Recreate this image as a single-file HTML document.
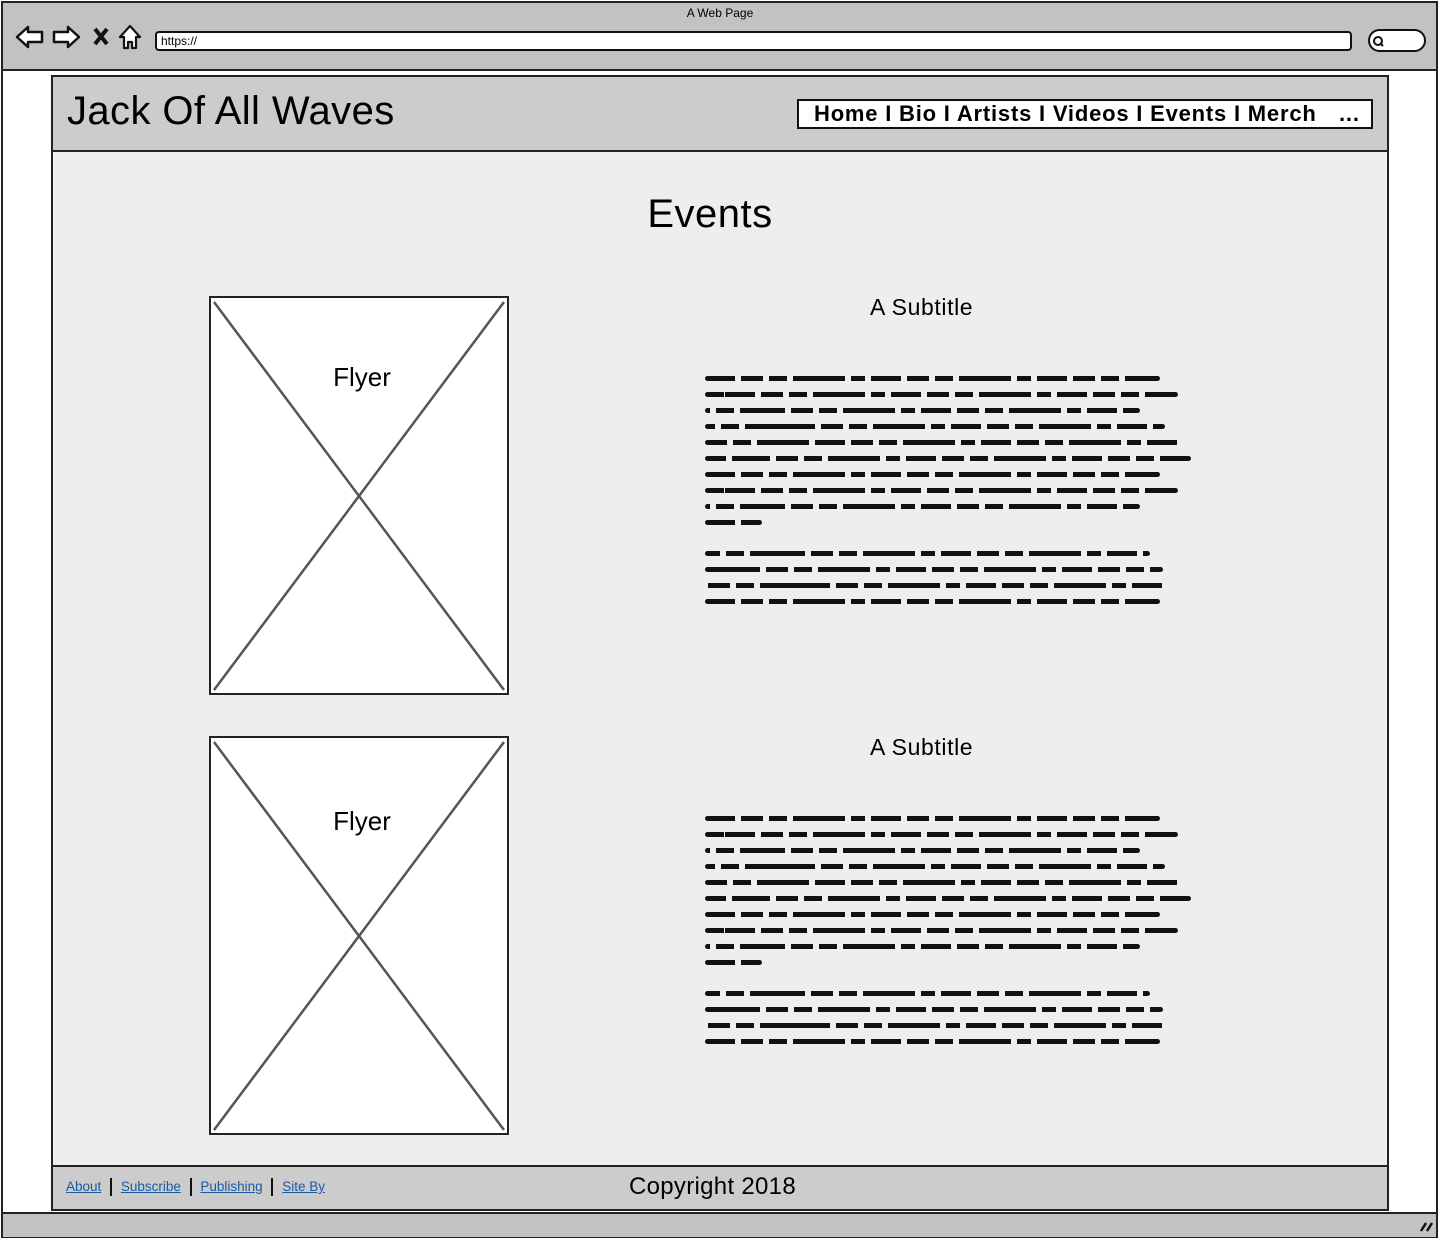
<!DOCTYPE html>
<html><head><meta charset="utf-8"><style>
*{margin:0;padding:0;box-sizing:border-box}
body{width:1440px;height:1240px;background:#fff;position:relative;overflow:hidden;font-family:"Liberation Sans",sans-serif;color:#000}
.a{position:absolute}
.frame{left:1px;top:1px;width:1437px;height:1237px;border:2px solid #222;background:#fff}
.top{left:3px;top:3px;width:1433px;height:68px;background:#c2c2c2;border-bottom:2px solid #222}
.bot{left:3px;top:1212px;width:1433px;height:25px;background:#c2c2c2;border-top:2px solid #222}
.page{left:51px;top:75px;width:1338px;height:1136px;border:2px solid #222;background:#eee}
.hdr{left:53px;top:77px;width:1334px;height:75px;background:#ccc;border-bottom:2px solid #222}
.ftr{left:53px;top:1165px;width:1334px;height:44px;background:#ccc;border-top:2px solid #222}
.sc{position:absolute;left:705px;height:5px;border-radius:3px;
background:repeating-linear-gradient(90deg,#111 0 30px,transparent 30px 36px,#111 36px 58px,transparent 58px 64px,#111 64px 82px,transparent 82px 88px,#111 88px 140px,transparent 140px 146px,#111 146px 160px,transparent 160px 166px)}
.flyer{position:absolute;left:209px;width:300px;height:399px;border:2px solid #222;background:#fff}
.flyer span{position:absolute;left:0;width:100%;text-align:center;font-size:26px;top:64px;padding-left:6px}
.sub{position:absolute;left:870px;font-size:23px;letter-spacing:0.6px}
.lk a{color:#1a5aa0;text-decoration:underline;font-size:13.5px}
</style></head><body>
<div class="a frame"></div>
<div class="a top"></div>
<div class="a" style="left:0;top:6px;width:1440px;text-align:center;font-size:12px">A Web Page</div>
<svg class="a" style="left:14px;top:22px" width="135" height="30" viewBox="0 0 135 30">
<path d="M3 15 L14 5 L14 10 L28 10 L28 20 L14 20 L14 25 Z" fill="#fff" stroke="#111" stroke-width="2.5" stroke-linejoin="round"/>
<path d="M65 15 L54 5 L54 10 L40 10 L40 20 L54 20 L54 25 Z" fill="#fff" stroke="#111" stroke-width="2.5" stroke-linejoin="round"/>
<path d="M81 7 L93 22 M93 7 L81 22" stroke="#111" stroke-width="4"/>
<path d="M116 4 L106 15 L110 15 L110 26 L114 26 L114 20 L118 20 L118 26 L122 26 L122 15 L126 15 Z" fill="#fff" stroke="#111" stroke-width="2.2" stroke-linejoin="round"/>
</svg>
<div class="a" style="left:155px;top:31px;width:1197px;height:20px;background:#fff;border:2px solid #111;border-radius:4px;font-size:12px;padding:1px 4px">https://</div>
<div class="a" style="left:1368px;top:29px;width:58px;height:23px;background:#fff;border:2px solid #111;border-radius:12px"></div>
<svg class="a" style="left:1372px;top:35px" width="14" height="12"><circle cx="6" cy="6" r="4" fill="none" stroke="#111" stroke-width="2"/><path d="M8 8 L11 11" stroke="#111" stroke-width="2"/></svg>
<div class="a page"></div>
<div class="a hdr"></div>
<div class="a" style="left:67px;top:89px;font-size:40px;letter-spacing:0.4px;white-space:nowrap">Jack Of All Waves</div>
<div class="a" style="left:797px;top:99px;width:576px;height:30px;background:#fff;border:2px solid #111;font-size:22px;font-weight:bold;padding:0 0 0 15px;line-height:26px;letter-spacing:0.8px;white-space:nowrap;overflow:hidden">Home I Bio I Artists I Videos I Events I Merch<span style="position:absolute;left:540px;top:0">...</span></div>
<div class="a" style="left:0;top:192px;width:1420px;text-align:center;font-size:40px;letter-spacing:0.5px">Events</div>

<div class="flyer" style="top:296px"><svg class="a" style="left:0;top:0" width="296" height="395"><path d="M3 4 L293 392 M293 4 L3 392" stroke="#555" stroke-width="2.5"/></svg><span>Flyer</span></div>
<div class="flyer" style="top:736px"><svg class="a" style="left:0;top:0" width="296" height="395"><path d="M3 4 L293 392 M293 4 L3 392" stroke="#555" stroke-width="2.5"/></svg><span style="top:68px">Flyer</span></div>
<div class="sub" style="top:294px">A Subtitle</div>
<div class="sub" style="top:734px">A Subtitle</div>

<div class="sc" style="top:376px;width:455px"></div>
<div class="sc" style="top:392px;width:473px;background-position:20px 0"></div>
<div class="sc" style="top:408px;width:435px;background-position:50px 0"></div>
<div class="sc" style="top:424px;width:460px;background-position:80px 0"></div>
<div class="sc" style="top:440px;width:478px;background-position:110px 0"></div>
<div class="sc" style="top:456px;width:486px;background-position:35px 0"></div>
<div class="sc" style="top:472px;width:455px"></div>
<div class="sc" style="top:488px;width:473px;background-position:20px 0"></div>
<div class="sc" style="top:504px;width:435px;background-position:50px 0"></div>
<div class="sc" style="top:520px;width:57px"></div>
<div class="sc" style="top:551px;width:445px;background-position:70px 0"></div>
<div class="sc" style="top:567px;width:458px;background-position:25px 0"></div>
<div class="sc" style="top:583px;width:460px;background-position:95px 0"></div>
<div class="sc" style="top:599px;width:455px"></div>

<div class="sc" style="top:816px;width:455px"></div>
<div class="sc" style="top:832px;width:473px;background-position:20px 0"></div>
<div class="sc" style="top:848px;width:435px;background-position:50px 0"></div>
<div class="sc" style="top:864px;width:460px;background-position:80px 0"></div>
<div class="sc" style="top:880px;width:478px;background-position:110px 0"></div>
<div class="sc" style="top:896px;width:486px;background-position:35px 0"></div>
<div class="sc" style="top:912px;width:455px"></div>
<div class="sc" style="top:928px;width:473px;background-position:20px 0"></div>
<div class="sc" style="top:944px;width:435px;background-position:50px 0"></div>
<div class="sc" style="top:960px;width:57px"></div>
<div class="sc" style="top:991px;width:445px;background-position:70px 0"></div>
<div class="sc" style="top:1007px;width:458px;background-position:25px 0"></div>
<div class="sc" style="top:1023px;width:460px;background-position:95px 0"></div>
<div class="sc" style="top:1039px;width:455px"></div>

<div class="a ftr"></div>
<div class="a lk" style="left:66px;top:1178px;font-size:13.5px;line-height:18px;white-space:nowrap">
<a>About</a> <span style="display:inline-block;width:2px;height:18px;background:#111;vertical-align:middle;margin:0 5px"></span>
<a>Subscribe</a> <span style="display:inline-block;width:2px;height:18px;background:#111;vertical-align:middle;margin:0 5px"></span>
<a>Publishing</a> <span style="display:inline-block;width:2px;height:18px;background:#111;vertical-align:middle;margin:0 5px"></span>
<a>Site By</a></div>
<div class="a" style="left:629px;top:1173px;font-size:24px;letter-spacing:0.3px">Copyright 2018</div>
<div class="a bot"></div>
<svg class="a" style="left:1418px;top:1219px" width="16" height="14"><path d="M3 12 L8 4 M9 12 L14 4" stroke="#111" stroke-width="2.5"/></svg>
</body></html>
